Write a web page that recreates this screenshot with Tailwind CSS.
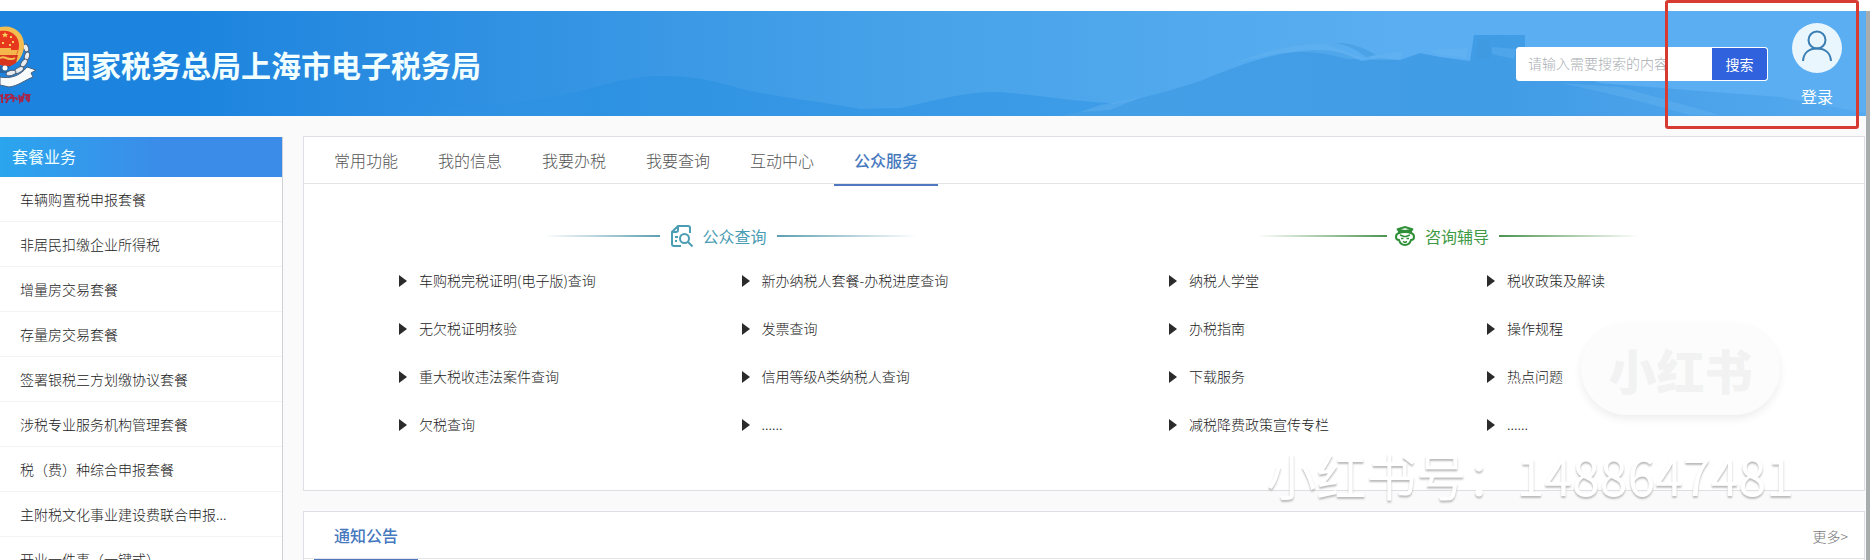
<!DOCTYPE html>
<html lang="zh-CN">
<head>
<meta charset="utf-8">
<meta name="viewport" content="width=device-width, initial-scale=1">
<title>国家税务总局上海市电子税务局</title>
<script src="https://cdn.jsdelivr.net/npm/@tailwindcss/browser@4"></script>
</head>
<body class="relative flex h-screen flex-col overflow-hidden bg-white pt-[11px] font-['Noto_Sans_CJK_SC',sans-serif] text-sm font-light text-[#222]">

<div class="flex min-h-0 flex-1 flex-col border-r-4 border-[#a9acac] bg-[#fafafb]">
  <!-- Header -->
  <header class="relative flex h-[105px] shrink-0 items-center bg-linear-to-r from-[#1c84de] from-10% via-[#48a3e9] via-50% to-[#5aaef1] to-75%">
    <svg class="absolute inset-0 h-full w-full" viewBox="0 0 1866 105" preserveAspectRatio="none" aria-hidden="true">
      <defs>
        <linearGradient id="hillA" x1="0" x2="1" y1="0" y2="0"><stop offset="0" stop-color="#2e90e2" stop-opacity="0"/><stop offset=".3" stop-color="#2e92e2"/><stop offset="1" stop-color="#3f9de8"/></linearGradient>
        <linearGradient id="hillB" x1="0" x2="1" y1="0" y2="0"><stop offset="0" stop-color="#449fe7"/><stop offset=".55" stop-color="#419ce6"/><stop offset="1" stop-color="#55a9ee"/></linearGradient>
      </defs>
      <path fill="url(#hillA)" d="M370 105C430 97 500 95 540 88C590 80 620 66 655 65C700 64 720 72 750 80C790 88 830 92 860 98L900 97C940 88 970 80 1000 81C1040 84 1070 90 1110 92L1130 105Z"/>
      <path fill="url(#hillB)" d="M1060 105C1110 94 1160 84 1200 70C1240 54 1270 42 1312 39C1340 38 1350 45 1362 50L1380 47L1400 49L1420 42L1440 46L1470 50L1474 24L1525 24L1525 36L1516 46L1600 72L1700 80L1780 86L1866 102V105Z"/>
      <path fill="#69b6f2" opacity=".35" d="M1225 56C1260 42 1290 32 1325 33L1366 48L1346 48C1310 36 1270 40 1225 56ZM1370 45L1404 40L1400 49L1372 49ZM1428 39L1468 37L1466 47L1440 44ZM1492 36L1516 38L1514 48L1492 43ZM1560 72L1620 76L1720 104L1690 104C1640 90 1600 80 1560 72ZM1100 94L1142 86L1110 99L1080 101Z"/>
      <path fill="#3d97de" opacity=".5" d="M1335 32C1352 31 1366 38 1376 44L1366 46C1356 38 1346 34 1335 32ZM1478 28H1490V48H1476Z"/>
    </svg>
    <svg class="relative h-20 w-9 shrink-0" viewBox="0 0 36 80" aria-hidden="true">
      <g stroke="#4e5f78" stroke-width="1" fill="#e9edf0"><ellipse cx="26" cy="24" rx="2.5" ry="4" transform="rotate(-20 26 24)"/><ellipse cx="27" cy="32" rx="2.5" ry="4" transform="rotate(15 27 32)"/><ellipse cx="24" cy="39" rx="2.5" ry="4.5" transform="rotate(35 24 39)"/><ellipse cx="19" cy="46" rx="2.5" ry="5" transform="rotate(60 19 46)"/><ellipse cx="11" cy="49" rx="2.5" ry="5" transform="rotate(75 11 49)"/></g>
      <path d="M0 3C14 0 24 9 24 21C24 28 21 34 17 38L0 40Z" fill="#f3bd52"/>
      <path d="M0 7C11 5 19 12 19 21C19 25 18 29 16 31H0Z" fill="#e8371f"/>
      <path d="m5 8 1 2h2l-1.5 1.5.5 2L5 12.300 3 13.500l.5-2L2 10h2zM10 12h2v2h-2zM12 17h2v2h-2zM9 20h2v2H9zM2 18h2v2H2z" fill="#f7cf5b"/>
      <path d="M0 24H11V26H18L16 31H0Z" fill="#f5b64c"/>
      <path d="M0 31H18L16 39L9 43L0 41Z" fill="#d9361f"/>
      <path d="M0 34C6 31 8 38 15 34" fill="none" stroke="#f5bd52" stroke-width="2"/>
      <path d="M0 42H10L6 49H0Z" fill="#2766a3"/><circle cx="5" cy="44" r="2.5" fill="#fff"/>
      <path d="M0 53C10 55 20 52 27 43L36 46L31 49L33 53C25 56 18 62 9 63L0 61Z" fill="#f8fbfc" stroke="#48607d" stroke-width="1"/>
      <path d="M0 72l2-1v8M5 71h3l-3 3 3 1-2 4M10 70l3 2-3 2h4l-1 4M16 73l1 3M19 71l1 6 2-5M24 69l-2 9M25 71h4l-3 3 3 4M29 70v7" fill="none" stroke="#a5264c" stroke-width="2"/>
    </svg>
    <h1 class="relative ml-[25px] flex-1 text-[30px] leading-[44px] font-bold whitespace-nowrap text-[#f2ffff]">国家税务总局上海市电子税务局</h1>
    <form class="relative flex h-[34px] w-[252px] overflow-hidden rounded-[3px] border border-white bg-white" role="search">
      <input type="text" aria-label="搜索内容" placeholder="请输入需要搜索的内容" class="min-w-0 flex-1 pb-0.5 pl-[11px] text-sm outline-none placeholder:text-[#a9adb3]">
      <button type="button" class="w-[55px] rounded-r-[2px] bg-[#2f62dc] text-sm font-normal text-white">搜索</button>
    </form>
    <a href="#" class="relative mr-6 ml-6 flex w-[50px] flex-col items-center pt-1 text-base leading-6 font-normal text-white">
      <svg class="h-[50px] w-[50px]" viewBox="0 0 50 50" fill="none" aria-hidden="true"><circle cx="25" cy="25" r="25" fill="#eaf6fd"/><g stroke="#3a7eb3" stroke-width="2"><circle cx="25" cy="17" r="8.5"/><path d="M11 38C11.500 30 17 25.500 25 25.500S38.500 30 39 38"/></g></svg>
      <span class="mt-[11px]">登录</span>
    </a>
  </header>

  <div class="flex min-h-0 flex-1 gap-5 pt-5">
    <!-- Package services -->
    <aside class="mt-px w-[283px] shrink-0 border-r border-[#cfd1d6] bg-white">
      <h2 class="h-10 bg-linear-to-r from-[#2aa5ee] to-[#3b8be8] to-60% pl-3 text-base leading-[38px] font-normal text-[#f0ffff]">套餐业务</h2>
      <ul class="*:h-[45px] *:border-b *:border-[#f3f3f5] *:pl-5 *:leading-[45px]">
        <li><a href="#">车辆购置税申报套餐</a></li>
        <li><a href="#">非居民扣缴企业所得税</a></li>
        <li><a href="#">增量房交易套餐</a></li>
        <li><a href="#">存量房交易套餐</a></li>
        <li><a href="#">签署银税三方划缴协议套餐</a></li>
        <li><a href="#">涉税专业服务机构管理套餐</a></li>
        <li><a href="#">税（费）种综合申报套餐</a></li>
        <li><a href="#">主附税文化事业建设费联合申报...</a></li>
        <li><a href="#">开业一件事（一键式）</a></li>
      </ul>
    </aside>

    <main class="flex min-w-0 flex-1 flex-col gap-5 pr-px">
      <section class="h-[355px] shrink-0 border border-[#dcdfe3] bg-white">
        <nav class="flex h-[47px] border-b border-[#e2e4e7] pl-2.5 text-base leading-[46px] text-[#555] *:px-5">
          <a href="#">常用功能</a>
          <a href="#">我的信息</a>
          <a href="#">我要办税</a>
          <a href="#">我要查询</a>
          <a href="#">互动中心</a>
          <a href="#" aria-current="page" class="h-[49px] border-b-2 border-[#4f78c0] font-medium text-[#4678be]">公众服务</a>
        </nav>
        <div class="grid grid-cols-2 pt-10">
          <div class="pl-[95px]">
            <h3 class="flex items-center justify-center gap-2.5 pr-[22px] text-base leading-6 font-normal text-[#4b9db3]">
              <span class="h-0.5 w-[116px] bg-linear-to-r from-white to-[#5d9fb3]"></span>
              <svg class="h-6 w-6" viewBox="0 0 24 24" fill="none" stroke="#4b9db3" stroke-width="2" aria-hidden="true"><path d="M20 9V4Q20 2 18 2H8L2 8V20Q2 22 4 22H11M8 2V6Q8 8 6 8H2M5 13H8M5 17H7"/><circle cx="14.500" cy="14.500" r="4.500"/><path d="m18 18 4.500 4.500"/></svg>
              <span class="-ml-0.5">公众查询</span>
              <span class="h-0.5 w-[140px] bg-linear-to-r from-[#5d9fb3] to-white"></span>
            </h3>
            <ul class="mt-2 grid grid-cols-2 *:h-12 *:leading-[48px]">
              <li class="flex items-center gap-3"><svg class="mt-0.5 h-3 w-2" viewBox="0 0 8 12" aria-hidden="true"><path fill="#2b2b2b" d="M0 0 8 6 0 12z"/></svg><a href="#">车购税完税证明(电子版)查询</a></li>
              <li class="flex items-center gap-3"><svg class="mt-0.5 h-3 w-2" viewBox="0 0 8 12" aria-hidden="true"><path fill="#2b2b2b" d="M0 0 8 6 0 12z"/></svg><a href="#">新办纳税人套餐-办税进度查询</a></li>
              <li class="flex items-center gap-3"><svg class="mt-0.5 h-3 w-2" viewBox="0 0 8 12" aria-hidden="true"><path fill="#2b2b2b" d="M0 0 8 6 0 12z"/></svg><a href="#">无欠税证明核验</a></li>
              <li class="flex items-center gap-3"><svg class="mt-0.5 h-3 w-2" viewBox="0 0 8 12" aria-hidden="true"><path fill="#2b2b2b" d="M0 0 8 6 0 12z"/></svg><a href="#">发票查询</a></li>
              <li class="flex items-center gap-3"><svg class="mt-0.5 h-3 w-2" viewBox="0 0 8 12" aria-hidden="true"><path fill="#2b2b2b" d="M0 0 8 6 0 12z"/></svg><a href="#">重大税收违法案件查询</a></li>
              <li class="flex items-center gap-3"><svg class="mt-0.5 h-3 w-2" viewBox="0 0 8 12" aria-hidden="true"><path fill="#2b2b2b" d="M0 0 8 6 0 12z"/></svg><a href="#">信用等级A类纳税人查询</a></li>
              <li class="flex items-center gap-3"><svg class="mt-0.5 h-3 w-2" viewBox="0 0 8 12" aria-hidden="true"><path fill="#2b2b2b" d="M0 0 8 6 0 12z"/></svg><a href="#">欠税查询</a></li>
              <li class="flex items-center gap-3"><svg class="mt-0.5 h-3 w-2" viewBox="0 0 8 12" aria-hidden="true"><path fill="#2b2b2b" d="M0 0 8 6 0 12z"/></svg><a href="#">......</a></li>
            </ul>
          </div>
          <div class="pr-[59px] pl-[85px]">
            <h3 class="flex items-center justify-center gap-2.5 pr-[78px] text-base leading-6 font-normal text-[#3f9a45]">
              <span class="h-0.5 w-[130px] bg-linear-to-r from-white to-[#4c9450]"></span>
              <svg class="-ml-0.5 h-5 w-5" viewBox="0 0 20 20" fill="none" stroke="#2f8f37" stroke-width="2" aria-hidden="true"><path d="M2 3.500 10 1l8 2.500L10 5zM4 4v4M16 4v4"/><path d="M4 7C0 8 0 14 4 14C5 17.500 8 19 10 19s5-1.500 6-5c4 0 4-6 0-7C13 5.500 7 5.500 4 7z"/><path stroke-width="1.500" d="m5 9 4 1.500h2L15 9M6 12.500h2.500M11.500 12.500H14M8 15.500l2 1 2-1"/></svg>
              <span>咨询辅导</span>
              <span class="h-0.5 w-[140px] bg-linear-to-r from-[#4c9450] to-white"></span>
            </h3>
            <ul class="mt-2 grid grid-cols-2 *:h-12 *:leading-[48px]">
              <li class="flex items-center gap-3"><svg class="mt-0.5 h-3 w-2" viewBox="0 0 8 12" aria-hidden="true"><path fill="#2b2b2b" d="M0 0 8 6 0 12z"/></svg><a href="#">纳税人学堂</a></li>
              <li class="flex items-center gap-3"><svg class="mt-0.5 h-3 w-2" viewBox="0 0 8 12" aria-hidden="true"><path fill="#2b2b2b" d="M0 0 8 6 0 12z"/></svg><a href="#">税收政策及解读</a></li>
              <li class="flex items-center gap-3"><svg class="mt-0.5 h-3 w-2" viewBox="0 0 8 12" aria-hidden="true"><path fill="#2b2b2b" d="M0 0 8 6 0 12z"/></svg><a href="#">办税指南</a></li>
              <li class="flex items-center gap-3"><svg class="mt-0.5 h-3 w-2" viewBox="0 0 8 12" aria-hidden="true"><path fill="#2b2b2b" d="M0 0 8 6 0 12z"/></svg><a href="#">操作规程</a></li>
              <li class="flex items-center gap-3"><svg class="mt-0.5 h-3 w-2" viewBox="0 0 8 12" aria-hidden="true"><path fill="#2b2b2b" d="M0 0 8 6 0 12z"/></svg><a href="#">下载服务</a></li>
              <li class="flex items-center gap-3"><svg class="mt-0.5 h-3 w-2" viewBox="0 0 8 12" aria-hidden="true"><path fill="#2b2b2b" d="M0 0 8 6 0 12z"/></svg><a href="#">热点问题</a></li>
              <li class="flex items-center gap-3"><svg class="mt-0.5 h-3 w-2" viewBox="0 0 8 12" aria-hidden="true"><path fill="#2b2b2b" d="M0 0 8 6 0 12z"/></svg><a href="#">减税降费政策宣传专栏</a></li>
              <li class="flex items-center gap-3"><svg class="mt-0.5 h-3 w-2" viewBox="0 0 8 12" aria-hidden="true"><path fill="#2b2b2b" d="M0 0 8 6 0 12z"/></svg><a href="#">......</a></li>
            </ul>
          </div>
        </div>
      </section>

      <!-- Notices -->
      <section class="min-h-[120px] border border-[#dcdfe3] bg-white">
        <div class="flex h-[47px] justify-between border-b border-[#e2e4e7] pr-4 pl-2.5 leading-[48px]">
          <h2 class="h-[49px] border-b-2 border-[#4f78c0] px-5 text-base leading-[46px] font-medium text-[#4678be]">通知公告</h2>
          <a href="#" class="text-[#777]">更多&gt;</a>
        </div>
      </section>
    </main>
  </div>
</div>

<!-- Highlight frame and watermark lie over the page -->
<div class="pointer-events-none absolute top-0 right-[11px] h-[129px] w-[194px] rounded-[3px] border-3 border-[#d63a30]"></div>
<div class="pointer-events-none absolute top-[323px] right-[90px] flex h-[92px] w-[199px] items-center justify-center rounded-full bg-[#fcfcfc] text-5xl font-black text-[#f2f2f2] shadow-[0_4px_8px_rgba(0,0,0,0.07)]">小红书</div>
<div class="pointer-events-none absolute top-[438px] right-[76px] text-[50px] leading-[72px] font-normal whitespace-nowrap text-white [text-shadow:0_2px_2px_#bbb]">小红书号：1488647481</div>
</body>
</html>
